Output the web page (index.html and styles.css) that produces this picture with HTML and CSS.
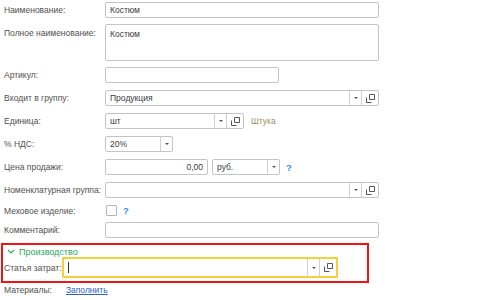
FILE: index.html
```html
<!DOCTYPE html>
<html lang="ru">
<head>
<meta charset="UTF-8" />
<title>Номенклатура</title>
<link rel="stylesheet" href="styles.css">
</head>
<body>
<div class="form">
    <div class="row first"><span class="label">Наименование:</span><div class="field wide">Костюм</div></div>
    <div class="row top"><span class="label">Полное наименование:</span><div class="field wide area">Костюм</div></div>
    <div class="row"><span class="label">Артикул:</span><div class="field art"></div></div>
    <div class="row"><span class="label">Входит в группу:</span>
        <div class="field wide combo"><span class="val">Продукция</span><span class="btn dd"><i></i></span><span class="btn op"><svg width="9" height="9" viewBox="0 0 9 9"><path d="M3.5 0.5h5v5h-5z M0.5 3.5v5h5" fill="none" stroke="#555"/></svg></span></div></div>
    <div class="row"><span class="label">Единица:</span>
        <div class="field unit combo"><span class="val">шт</span><span class="btn dd"><i></i></span><span class="btn op"><svg width="9" height="9" viewBox="0 0 9 9"><path d="M3.5 0.5h5v5h-5z M0.5 3.5v5h5" fill="none" stroke="#555"/></svg></span></div>
        <span class="note">Штука</span></div>
    <div class="row"><span class="label">% НДС:</span>
        <div class="field vat combo"><span class="val">20%</span><span class="btn dd"><i></i></span></div></div>
    <div class="row"><span class="label">Цена продажи:</span>
        <div class="field price">0,00</div>
        <div class="field cur combo"><span class="val">руб.</span><span class="btn dd"><i></i></span></div>
        <span class="help">?</span></div>
    <div class="row"><span class="label">Номенклатурная группа:</span>
        <div class="field wide combo"><span class="val"></span><span class="btn dd"><i></i></span><span class="btn op"><svg width="9" height="9" viewBox="0 0 9 9"><path d="M3.5 0.5h5v5h-5z M0.5 3.5v5h5" fill="none" stroke="#555"/></svg></span></div></div>
    <div class="row small"><span class="label">Меховое изделие:</span><span class="check"></span><span class="help">?</span></div>
    <div class="row last"><span class="label">Комментарий:</span><div class="field wide"></div></div>
    <div class="group">
        <div class="group-title"><svg width="8" height="5" viewBox="0 0 8 5"><path d="M0.8 0.8l3.2 3.2l3.2-3.2" fill="none" stroke="#2da55a" stroke-width="1.2"/></svg>Производство</div>
        <div class="row"><span class="label cost-label">Статья затрат:</span>
            <div class="field cost combo"><span class="val"><span class="caret"></span></span><span class="btn dd"><i></i></span><span class="btn op"><svg width="9" height="9" viewBox="0 0 9 9"><path d="M3.5 0.5h5v5h-5z M0.5 3.5v5h5" fill="none" stroke="#555"/></svg></span></div></div>
    </div>
    <div class="row"><span class="label short">Материалы:</span><a class="link" href="#">Заполнить</a></div>
</div>
</body>
</html>
```

FILE: styles.css
```css
body { margin: 0; background: #fff; font-family: "Liberation Sans", Arial, sans-serif; font-size: 8.5px; color: #505050; }
.form { padding: 2px 0 0 4px; }
.row { display: flex; align-items: center; height: 16px; margin-bottom: 7px; }
.row.first { margin-bottom: 6px; }
.row.top { align-items: flex-start; height: 37px; margin-bottom: 6px; }
.row.top .label { padding-top: 4px; }
.row.small { height: 11px; margin-bottom: 6px; }
.row.last { margin-bottom: 5px; }
.label { width: 101px; flex-shrink: 0; white-space: nowrap; }
.field { box-sizing: border-box; height: 16px; border: 1px solid #c4c4c4; border-radius: 2px; background: #fff; color: #3a3a3a; padding: 0 4px; display: flex; align-items: center; }
.wide { width: 274px; }
.area { height: 37px; align-items: flex-start; padding-top: 4px; }
.art { width: 174px; }
.unit { width: 139px; }
.vat { width: 68px; }
.price { width: 103px; justify-content: flex-end; }
.cur { width: 68px; margin-left: 4px; }
.field.cost { width: 276px; height: 21px; border: 2px solid #f8cd3c; border-radius: 1px; }
.combo { padding-right: 0; }
.combo .val { flex: 1; }
.btn { height: 100%; display: flex; align-items: center; justify-content: center; border-left: 1px solid #d0d0d0; }
.btn.dd { width: 11px; }
.btn.dd i { width: 0; height: 0; border-left: 2px solid transparent; border-right: 2px solid transparent; border-top: 2px solid #555; }
.btn.op { width: 16px; }
.note { color: #9b8e62; margin-left: 7px; }
.help { color: #3b8fd6; font-weight: bold; font-size: 9.5px; margin-left: 6px; }
.check { box-sizing: border-box; width: 11px; height: 11px; border: 1px solid #b5b5b5; border-radius: 1px; margin-left: 1px; }
.group { box-sizing: border-box; margin: 0 0 -1px -3px; width: 368px; height: 40px; border: 2px solid #f01414; padding: 0 0 0 1px; }
.group-title { color: #2da55a; font-size: 9px; height: 11px; display: flex; align-items: center; gap: 4px; margin: 1px 0 0 3px; }
.group .row { height: 21px; margin: 0; }
.label.cost-label { width: 58px; }
.label.short { width: auto; }
.caret { display: inline-block; width: 1px; height: 11px; background: #333; vertical-align: middle; }
.link { color: #2a62c8; text-decoration: underline; margin-left: 14px; }
```
